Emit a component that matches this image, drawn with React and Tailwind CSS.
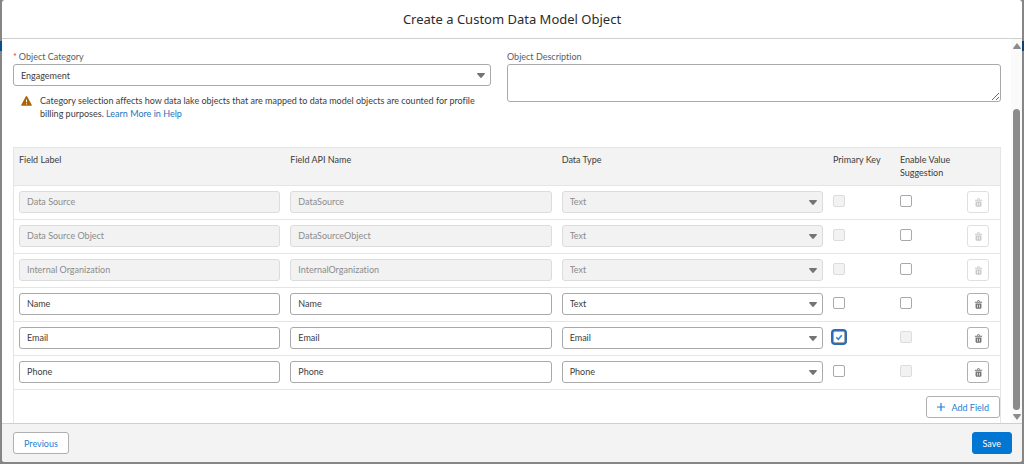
import React, { useState } from "react";
import clsx from "clsx";

const initialFields = [
  { label: "Data Source", api: "DataSource", type: "Text", locked: true, canSuggest: true },
  { label: "Data Source Object", api: "DataSourceObject", type: "Text", locked: true, canSuggest: true },
  { label: "Internal Organization", api: "InternalOrganization", type: "Text", locked: true, canSuggest: true },
  { label: "Name", api: "Name", type: "Text", canSuggest: true },
  { label: "Email", api: "Email", type: "Email", primary: true },
  { label: "Phone", api: "Phone", type: "Phone" },
];

const controlClass =
  "block h-[22px] w-full rounded-[3px] border border-[#a9a9a9] bg-white px-[7px] text-[#3c3c3c] outline-none disabled:border-[#dcdcdc] disabled:bg-[#f2f2f2] disabled:text-[#8c8c8c] disabled:opacity-100";

function TrashIcon() {
  return (
    <svg viewBox="0 0 52 52" className="mt-0.5 size-[9px]" fill="currentColor" aria-hidden="true">
      <path d="M45.5 10H33V6c0-2.2-1.8-4-4-4h-6c-2.2 0-4 1.8-4 4v4H6.5c-.8 0-1.5.7-1.5 1.5v3c0 .8.7 1.5 1.5 1.5h39c.8 0 1.5-.7 1.5-1.5v-3c0-.8-.7-1.5-1.5-1.5zM23 7c0-.6.4-1 1-1h4c.6 0 1 .4 1 1v3h-6V7zM41.5 20h-31c-.8 0-1.5.7-1.5 1.5V45c0 2.8 2.2 5 5 5h24c2.8 0 5-2.2 5-5V21.5c0-.8-.7-1.5-1.5-1.5zM23 42c0 .6-.4 1-1 1h-2c-.6 0-1-.4-1-1V28c0-.6.4-1 1-1h2c.6 0 1 .4 1 1v14zm10 0c0 .6-.4 1-1 1h-2c-.6 0-1-.4-1-1V28c0-.6.4-1 1-1h2c.6 0 1 .4 1 1v14z" />
    </svg>
  );
}

function WarningIcon() {
  return (
    <svg viewBox="0 0 22 20" className="h-2.5 w-[11px] shrink-0" aria-hidden="true">
      <path d="M9.6 1a1.6 1.6 0 0 1 2.8 0l9 16.4a1.3 1.3 0 0 1-1.2 2H1.8a1.3 1.3 0 0 1-1.2-2z" fill="#a96404" />
      <path d="M11 7v5.4M11 14.6v2.2" stroke="#fff" strokeWidth="2" />
    </svg>
  );
}

function Select({ options, ...props }) {
  return (
    <div className="relative">
      <select {...props} className={clsx(controlClass, "appearance-none pr-5")}>
        {options.map((o) => (
          <option key={o}>{o}</option>
        ))}
      </select>
      <svg viewBox="0 0 8 5" className="pointer-events-none absolute top-[9px] right-1.5 h-[5px] w-2" fill="#747474" aria-hidden="true">
        <path d="M.6 0h6.8c.5 0 .7.5.4.9L4.500 4.700a.7.7 0 0 1-1 0L.2.9C-.1.500.1 0 .6 0z" />
      </svg>
    </div>
  );
}

function Checkbox({ focused, ...props }) {
  return (
    <span className="relative block size-3">
      <input
        type="checkbox"
        {...props}
        className={clsx(
          "peer block size-3 appearance-none rounded-[2px] border border-[#a9a9a9] bg-white outline-none disabled:border-[#dcdcdc] disabled:bg-[#f2f2f2]",
          focused && "ring-2 ring-[#2a6db4]"
        )}
      />
      <svg viewBox="0 0 12 12" className="pointer-events-none absolute inset-0 hidden size-3 peer-checked:block" fill="none" aria-hidden="true">
        <path d="M3.300 6.300l2 2 3.500-4" stroke="#2a86dc" strokeWidth="1.600" />
      </svg>
    </span>
  );
}

function FieldRow({ field, onToggle }) {
  return (
    <tr className="h-[34px] border-t border-[#e5e5e5] align-top">
      <td className="px-[5px] pt-[5px]">
        <input className={controlClass} defaultValue={field.label} disabled={field.locked} aria-label="Field Label" />
      </td>
      <td className="px-[5px] pt-[5px]">
        <input className={controlClass} defaultValue={field.api} disabled={field.locked} aria-label="Field API Name" />
      </td>
      <td className="px-[5px] pt-[5px]">
        <Select options={["Text", "Email", "Phone"]} defaultValue={field.type} disabled={field.locked} aria-label="Data Type" />
      </td>
      <td className="px-[5px] pt-[9px]">
        <Checkbox
          checked={!!field.primary}
          onChange={onToggle}
          focused={field.primary}
          disabled={field.locked}
          aria-label="Primary Key"
        />
      </td>
      <td className="px-[5px] pt-[9px]">
        <Checkbox disabled={!field.canSuggest} aria-label="Enable Value Suggestion" />
      </td>
      <td className="px-[5px] pt-[5px]">
        <button
          type="button"
          disabled={field.locked}
          aria-label={`Delete ${field.label}`}
          className="flex size-[22px] items-center justify-center rounded-[3px] border border-[#b0b0b0] bg-white text-[#747474] disabled:border-[#dfdfdf] disabled:text-[#c9c9c9]"
        >
          <TrashIcon />
        </button>
      </td>
    </tr>
  );
}

// Slim classic scrollbar drawn next to the modal body
function ScrollRail() {
  return (
    <div className="flex w-[11px] shrink-0 flex-col items-center bg-[#fafafa] pt-1 pb-[3px]" aria-hidden="true">
      <svg viewBox="0 0 8 6" className="h-1.5 w-2" fill="#8b8b8b">
        <path d="M4 0l4 5.200q0 .8-.8.8H.8Q0 6 0 5.200z" />
      </svg>
      <div className="grow-[19]" />
      <div className="w-[7px] grow-[95] rounded-full bg-[#8b8b8b]" />
      <svg viewBox="0 0 8 6" className="mt-1 h-1.5 w-2" fill="#8b8b8b">
        <path d="M4 6L0 .8Q0 0 .8 0h6.400Q8 0 8 .8z" />
      </svg>
    </div>
  );
}

export default function App() {
  const [fields, setFields] = useState(initialFields);

  const togglePrimary = (index) =>
    setFields(fields.map((f, i) => (i === index ? { ...f, primary: !f.primary } : f)));

  return (
    <div className="flex h-screen bg-[#868686] font-[Lato,'Open_Sans',sans-serif] text-[9px] leading-[13px] text-[#3c3c3c] [font-variant-ligatures:none]">
      {/* page edge behind the dialog */}
      <div className="w-0.5 shrink-0 pt-[41px]">
        <div className="h-2.5 bg-[#07508f]" />
      </div>

      <div role="dialog" aria-labelledby="title" className="mb-0.5 flex min-w-0 grow flex-col overflow-hidden rounded-[3px] bg-white">
        <header className="flex h-[39px] shrink-0 items-center justify-center border-b border-[#cfcfcf]">
          <h1 id="title" className="font-['Noto_Sans','Open_Sans',sans-serif] text-[13px] leading-5 text-[#2b2b2b]">
            Create a Custom Data Model Object
          </h1>
        </header>

        <div className="flex min-h-0 grow">
          <main className="flex min-w-0 grow flex-col overflow-hidden pt-[11px] pr-2.5 pl-[11px]">
            <div className="grid grid-cols-2">
              <div className="pr-4">
                <label htmlFor="category" className="mb-px block text-[#5c5c5c]">
                  <span className="mr-0.5 text-[#d33]">*</span>
                  Object Category
                </label>
                <Select id="category" options={["Engagement", "Profile", "Other"]} defaultValue="Engagement" />
                <div className="mt-2 flex items-start gap-2 pl-2">
                  <div className="pt-0.5">
                    <WarningIcon />
                  </div>
                  <p>
                    Category selection affects how data lake objects that are mapped to data model objects are counted for profile
                    billing purposes. <a href="#help" className="text-[#2574bd]">Learn More in Help</a>
                  </p>
                </div>
              </div>
              <div>
                <label htmlFor="description" className="mb-px block text-[#5c5c5c]">Object Description</label>
                <textarea
                  id="description"
                  className="block h-[38px] w-full rounded-[3px] border border-[#a9a9a9] bg-white px-2 outline-none"
                />
              </div>
            </div>

            <div className="mt-[27px] grow border border-b-0 border-[#e5e5e5]">
              <table className="w-full table-fixed border-collapse text-left">
                <colgroup>
                  <col />
                  <col />
                  <col />
                  <col className="w-[67px]" />
                  <col className="w-[67px]" />
                  <col className="w-[38px]" />
                </colgroup>
                <thead>
                  <tr className="h-[37px] bg-[#f3f3f3] align-top">
                    <th className="px-[5px] pt-[5px] font-normal">Field Label</th>
                    <th className="px-[5px] pt-[5px] font-normal">Field API Name</th>
                    <th className="px-[5px] pt-[5px] font-normal">Data Type</th>
                    <th className="px-[5px] pt-[5px] font-normal whitespace-nowrap">Primary Key</th>
                    <th className="px-[5px] pt-[5px] font-normal">Enable Value Suggestion</th>
                    <td />
                  </tr>
                </thead>
                <tbody>
                  {fields.map((field, i) => (
                    <FieldRow key={field.api} field={field} onToggle={() => togglePrimary(i)} />
                  ))}
                </tbody>
              </table>
              <div className="flex justify-end border-t border-[#e5e5e5] pt-1.5">
                <button
                  type="button"
                  className="flex h-[22px] items-center gap-1.5 rounded-[3px] border border-[#b0b0b0] bg-white px-2.5 text-[#1b7fd6]"
                >
                  <svg viewBox="0 0 8 8" className="size-2" stroke="currentColor" strokeWidth="1.200" aria-hidden="true">
                    <path d="M4 0v8M0 4h8" />
                  </svg>
                  Add Field
                </button>
              </div>
            </div>
          </main>
          <ScrollRail />
        </div>

        <footer className="flex shrink-0 items-center justify-between border-t border-[#cfcfcf] bg-[#f3f3f3] py-2 pr-2.5 pl-[11px]">
          <button type="button" className="h-[22px] rounded-[3px] border border-[#b0b0b0] bg-white px-2.5 text-[#1b7fd6]">
            Previous
          </button>
          <button type="button" className="h-[22px] rounded-[3px] border border-[#0176d3] bg-[#0176d3] px-2.5 text-white">
            Save
          </button>
        </footer>
      </div>

      <div className="w-0.5 shrink-0 pt-[41px]">
        <div className="h-2.5 bg-[#12406f]" />
      </div>
    </div>
  );
}
